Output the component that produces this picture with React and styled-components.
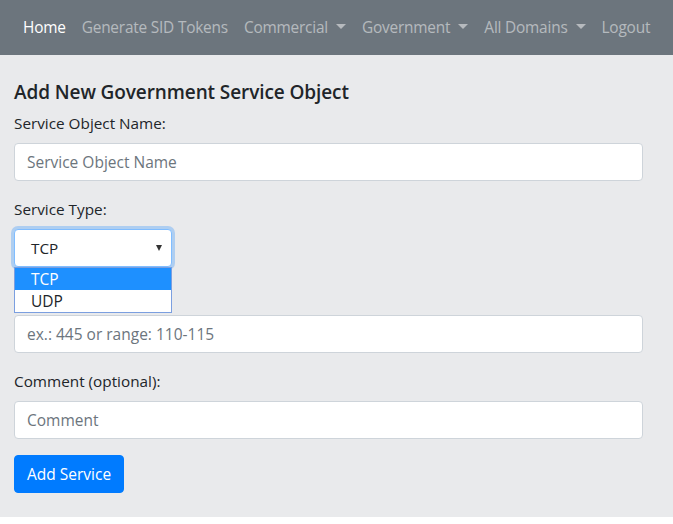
import React from 'react';
import styled, { createGlobalStyle } from 'styled-components';

const GlobalStyle = createGlobalStyle`
  html, body {
    margin: 0;
    padding: 0;
    background: #ffffff;
    font-family: "Open Sans", "Noto Sans", "Liberation Sans", sans-serif;
    color: #212529;
  }
  * { box-sizing: border-box; }
`

const NavBar = styled.nav`
  height: 55px;
  background-color: #6c757d;
  display: flex;
  align-items: center;
  padding: 0 15px;
`

const NavLink = styled.a`
  padding: 8px;
  font-size: 15.4px;
  line-height: 24px;
  letter-spacing: -0.2px;
  color: ${props => props.active ? '#ffffff' : 'rgba(255, 255, 255, 0.5)'};
  text-decoration: none;
  white-space: nowrap;
  display: flex;
  align-items: center;
`

const Caret = styled.span`
  display: inline-block;
  margin-left: 8px;
  width: 0;
  height: 0;
  border-top: 5px solid currentColor;
  border-left: 5px solid transparent;
  border-right: 5px solid transparent;
  margin-top: -2px;
`

const Main = styled.main`
  background-color: #e9eaec;
  padding: 25px 30px 24px 14px;
`

const Title = styled.h5`
  margin: 0 0 7px;
  font-size: 19px;
  font-weight: 600;
  line-height: 24px;
  letter-spacing: -0.1px;
  color: #212529;
`

const FormGroup = styled.div`
  position: relative;
  margin-bottom: 16px;
`

const Label = styled.label`
  display: block;
  margin-bottom: 8px;
  font-size: 15.3px;
  line-height: 24px;
  color: #212529;
`

const Input = styled.input`
  display: block;
  width: 100%;
  height: 38px;
  padding: 6px 12px;
  font-family: inherit;
  font-size: 15.5px;
  color: #495057;
  background: #fff;
  border: 1px solid #ced4da;
  border-radius: 4px;
  outline: none;

  &::placeholder {
    color: #6c757d;
    opacity: 1;
  }
`

const SelectWrap = styled.div`
  position: relative;
  width: 158px;
`

const SelectBox = styled.div`
  width: 158px;
  height: 38px;
  display: flex;
  align-items: center;
  justify-content: space-between;
  padding: 0 9px 0 16px;
  font-size: 15.3px;
  color: #212529;
  background: #fff;
  border: 1px solid #80bdff;
  border-radius: 4px;
  box-shadow: 0 0 0 3px rgba(0, 123, 255, 0.25);
`

const SelectArrow = styled.span`
  width: 0;
  height: 0;
  border-top: 6px solid #333;
  border-left: 3.5px solid transparent;
  border-right: 3.5px solid transparent;
`

const OptionList = styled.ul`
  position: absolute;
  left: 0;
  top: 100%;
  width: 158px;
  margin: 0;
  padding: 0;
  list-style: none;
  background: #fff;
  border: 1px solid #7b9fe0;
  z-index: 5;
`

const Option = styled.li`
  height: 22px;
  line-height: 22px;
  padding-left: 16px;
  font-size: 15.5px;
  color: ${props => props.selected ? '#ffffff' : '#212529'};
  background: ${props => props.selected ? '#1e90ff' : '#ffffff'};
`

const SubmitButton = styled.button`
  height: 38px;
  padding: 0 12px;
  font-family: inherit;
  font-size: 15.5px;
  color: #fff;
  background-color: #007bff;
  border: 1px solid #007bff;
  border-radius: 4px;
  cursor: pointer;
`

const links = [
  { label: 'Home', active: true },
  { label: 'Generate SID Tokens' },
  { label: 'Commercial', dropdown: true },
  { label: 'Government', dropdown: true },
  { label: 'All Domains', dropdown: true },
  { label: 'Logout' },
];

function App() {
  return (
    <>
      <GlobalStyle />
      <NavBar>
        {links.map(link => (
          <NavLink key={link.label} href="#" active={link.active}>
            {link.label}
            {link.dropdown && <Caret />}
          </NavLink>
        ))}
      </NavBar>
      <Main>
        <Title>Add New Government Service Object</Title>
        <FormGroup>
          <Label>Service Object Name:</Label>
          <Input placeholder="Service Object Name" />
        </FormGroup>
        <FormGroup>
          <Label>Service Type:</Label>
          <SelectWrap>
            <SelectBox>
              <span>TCP</span>
              <SelectArrow />
            </SelectBox>
            <OptionList>
              <Option selected>TCP</Option>
              <Option>UDP</Option>
            </OptionList>
          </SelectWrap>
        </FormGroup>
        <FormGroup>
          <Label>Port:</Label>
          <Input placeholder="ex.: 445 or range: 110-115" />
        </FormGroup>
        <FormGroup>
          <Label>Comment (optional):</Label>
          <Input placeholder="Comment" />
        </FormGroup>
        <SubmitButton>Add Service</SubmitButton>
      </Main>
    </>
  );
}

export default App;
